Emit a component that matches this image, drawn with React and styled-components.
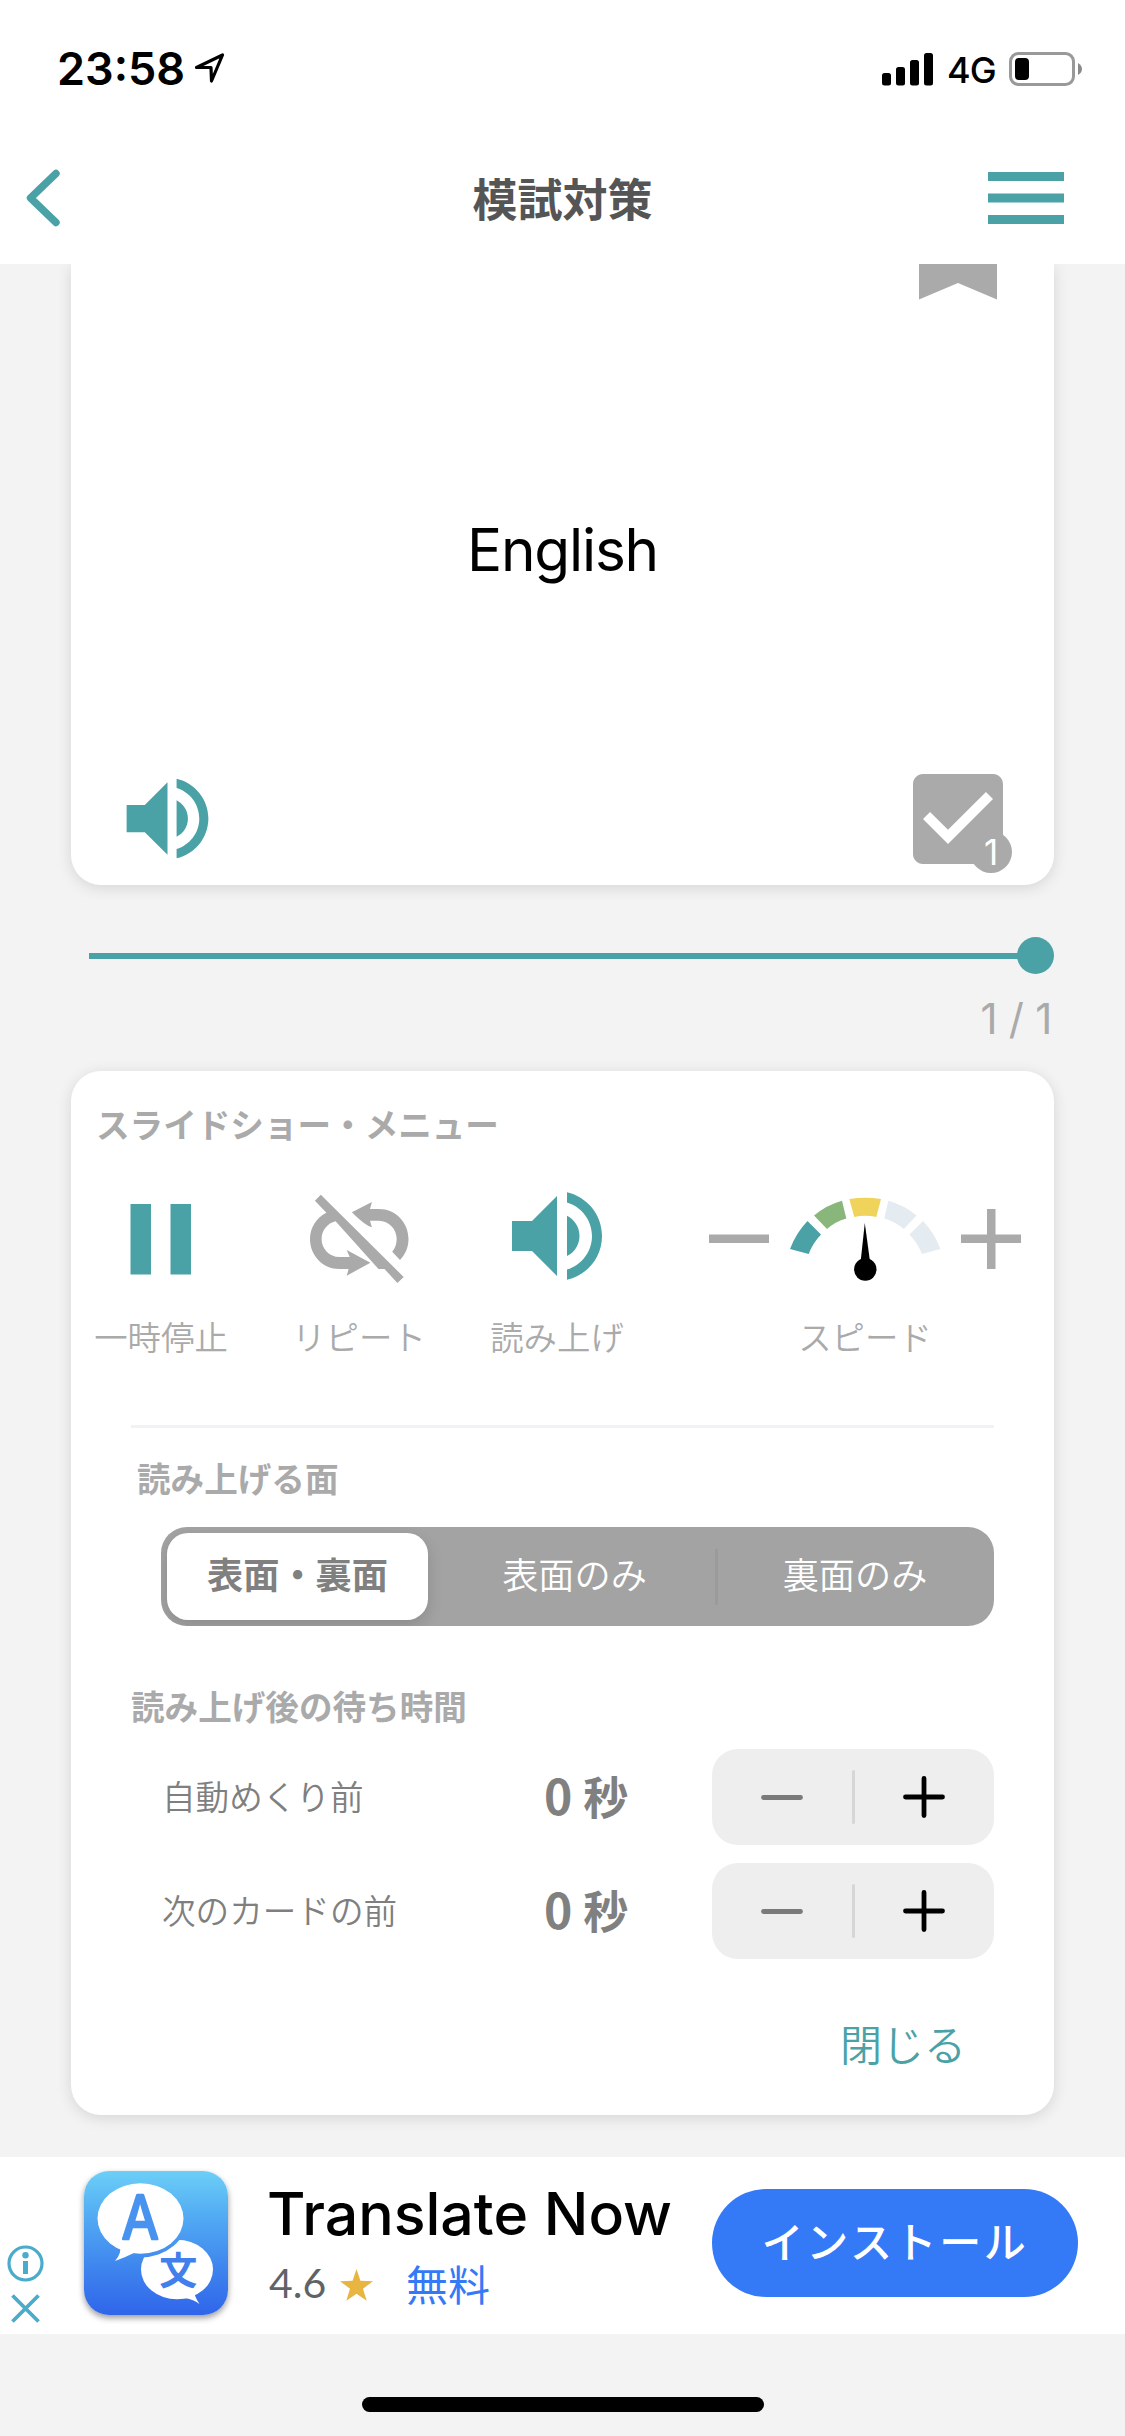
import React, { useState } from "react";
import styled, { createGlobalStyle } from "styled-components";

const TEAL = "#4aa2a7";
const GRAY = "#aaaaaa";
const JP = `"Noto Sans CJK JP", sans-serif`;
const LATIN = `Inter, "Liberation Sans", sans-serif`;

const GlobalStyle = createGlobalStyle`
    * {
        box-sizing: border-box;
    }
    body {
        margin: 0;
        background-color: #f3f3f3;
        font-family: ${JP};
    }
    button {
        border: none;
        padding: 0;
        margin: 0;
        background: none;
        font-family: inherit;
        cursor: pointer;
    }
    svg {
        display: block;
    }
`;

const Screen = styled.div`
    width: 1125px;
    height: 2436px;
    display: flex;
    flex-direction: column;
    background-color: #f3f3f3;
    overflow: hidden;
`;

const TopArea = styled.header`
    position: relative;
    z-index: 1;
    height: 264px;
    background-color: #fff;
`;

const StatusBar = styled.div`
    height: 132px;
    padding: 41px 43px 0 57px;
    display: flex;
    align-items: flex-start;
    justify-content: space-between;
    font-family: ${LATIN};
    color: #000;
`;

const StatusGroup = styled.div`
    height: 56px;
    display: flex;
    align-items: center;
`;

const Clock = styled.span`
    width: 137px;
    font-size: 45px;
    font-weight: 600;
    line-height: 56px;
`;

const Network = styled.span`
    width: 76px;
    padding: 2px 0 0 14px;
    font-size: 36px;
    font-weight: 500;
    letter-spacing: -1px;
    line-height: 56px;
`;

const NavBar = styled.div`
    height: 132px;
    padding: 0 61px 0 26px;
    display: grid;
    grid-template-columns: 200px 1fr 165px;
    align-items: center;
`;

const NavButton = styled.button`
    justify-self: ${(props) => props.$side};
    margin-bottom: 1px;
`;

const NavTitle = styled.h1`
    margin: 0;
    text-align: center;
    font-size: 45px;
    font-weight: 700;
    line-height: 60px;
    color: #555;
`;

const Content = styled.main`
    padding: 0 71px;
    display: flex;
    flex-direction: column;
`;

const FlashCard = styled.section`
    height: 621px;
    background-color: #fff;
    border-radius: 0 0 30px 30px;
    box-shadow: 0 3px 15px rgba(0, 0, 0, 0.12);
    display: flex;
    flex-direction: column;
`;

const CardTop = styled.div`
    padding-right: 57px;
    display: flex;
    justify-content: flex-end;
`;

const Word = styled.div`
    flex: 1;
    padding-top: 39px;
    display: flex;
    align-items: center;
    justify-content: center;
    font-family: ${LATIN};
    font-size: 58.5px;
    letter-spacing: -1.2px;
    color: #000;
`;

const CardBottom = styled.div`
    height: 126px;
    padding: 0 36px 0 42px;
    display: flex;
    justify-content: space-between;
    align-items: flex-start;
`;

const SpeakButton = styled.button`
    margin-top: 5px;
`;

const CheckButton = styled.button`
    position: relative;
`;

const CheckCount = styled.span`
    position: absolute;
    left: 72px;
    top: 72px;
    width: 42px;
    height: 42px;
    border-radius: 50%;
    background-color: ${GRAY};
    color: #fff;
    font-family: ${LATIN};
    font-size: 35px;
    line-height: 42px;
    text-align: center;
`;

const Slider = styled.div`
    height: 37px;
    margin: 52px 0 0 18px;
    display: flex;
    align-items: center;
`;

const Track = styled.div`
    flex: 1;
    height: 6px;
    margin-right: -2px;
    background-color: ${TEAL};
`;

const Knob = styled.div`
    width: 37px;
    height: 37px;
    border-radius: 50%;
    background-color: ${TEAL};
`;

const Counter = styled.div`
    height: 97px;
    padding: 20px 2px 0 0;
    font-family: ${LATIN};
    font-size: 42px;
    font-weight: 400;
    letter-spacing: -0.3px;
    line-height: 50px;
    text-align: right;
    color: ${GRAY};
`;

const Panel = styled.section`
    height: 1044px;
    padding-top: 31px;
    background-color: #fff;
    border-radius: 30px;
    box-shadow: 0 3px 15px rgba(0, 0, 0, 0.12);
    display: flex;
    flex-direction: column;
`;

const Heading = styled.h2`
    margin: ${(props) => props.$margin};
    font-size: 33.6px;
    font-weight: 700;
    line-height: 44px;
    color: ${GRAY};
`;

const Controls = styled.div`
    padding-left: 24px;
    display: flex;
`;

const Control = styled.div`
    width: ${(props) => props.$width || "132px"};
    margin-right: ${(props) => props.$gap || "66px"};
    display: flex;
    flex-direction: column;
    align-items: center;
`;

const ControlIcon = styled.div`
    width: 100%;
    height: 120px;
    padding-top: ${(props) => (props.$flush ? "0" : "6px")};
    display: flex;
    align-items: center;
    justify-content: ${(props) => (props.$spread ? "space-between" : "center")};
`;

const ControlLabel = styled.span`
    margin-top: 18px;
    font-size: 33.4px;
    font-weight: 350;
    line-height: 44px;
    white-space: nowrap;
    color: ${GRAY};
`;

const Divider = styled.hr`
    width: 863px;
    height: 3px;
    margin: 67px 0 0 60px;
    border: none;
    background-color: #f2f2f6;
`;

const Segmented = styled.div`
    width: 833px;
    height: 99px;
    margin-left: 90px;
    padding: 6px 0;
    border-radius: 26px;
    background-color: #a3a3a3;
    display: flex;
    align-items: center;
    overflow: hidden;
`;

const Segment = styled.button`
    flex: none;
    width: ${(props) => props.$width};
    height: 87px;
    margin: ${(props) => (props.$active ? "0 6px" : "0")};
    padding-bottom: 6px;
    border-radius: 21px;
    background-color: ${(props) => (props.$active ? "#fff" : "transparent")};
    box-shadow: ${(props) => (props.$active ? "0 6px 16px rgba(0, 0, 0, 0.14)" : "none")};
    color: ${(props) => (props.$active ? "#808080" : "#fff")};
    font-size: 36.2px;
    font-weight: ${(props) => (props.$active ? 700 : 350)};
    line-height: 81px;
`;

const SegmentLine = styled.span`
    width: 3px;
    height: 56px;
    background-color: #9b9b9d;
`;

const WaitRow = styled.div`
    height: 96px;
    margin: 0 60px 18px 91px;
    display: flex;
    align-items: center;
`;

const WaitLabel = styled.span`
    width: 382px;
    padding-bottom: 2px;
    font-size: 33.6px;
    font-weight: 350;
    line-height: 44px;
    color: #7f7f7f;
`;

const WaitValue = styled.span`
    width: 168px;
    font-size: 48px;
    font-weight: 700;
    line-height: 60px;
    padding-bottom: 4px;
    color: #808080;
`;

const WaitUnit = styled.span`
    font-size: 45px;
`;

const Stepper = styled.div`
    width: 282px;
    height: 96px;
    border-radius: 26px;
    background-color: #eeeeee;
    display: flex;
    align-items: center;
`;

const StepButton = styled.button`
    flex: 1;
    height: 96px;
    display: flex;
    align-items: center;
    justify-content: center;
    color: ${(props) => (props.disabled ? "#7a7a79" : "#000")};
`;

const StepLine = styled.span`
    width: 3px;
    height: 54px;
    background-color: #d6d6d6;
    border-radius: 2px;
`;

const CloseButton = styled.button`
    align-self: flex-end;
    margin: 41px 88px 0 0;
    font-size: 42px;
    font-weight: 350;
    line-height: 50px;
    color: ${TEAL};
`;

const AdBanner = styled.aside`
    height: 177px;
    margin-top: 42px;
    background-color: #fff;
    display: flex;
`;

const AdMarks = styled.div`
    width: 84px;
    padding: 88px 0 0 7px;
`;

const AppIcon = styled.div`
    width: 144px;
    height: 144px;
    margin-top: 14px;
    border-radius: 25px;
    background: linear-gradient(#6ccff7 0%, #51a9f3 33%, #3f86ee 66%, #2f65ea 100%);
    box-shadow: 0 3px 6px rgba(0, 0, 0, 0.4);
    overflow: hidden;
`;

const AdText = styled.div`
    width: 484px;
    padding: 20px 0 0 41px;
`;

const AdTitle = styled.div`
    margin-left: -2px;
    font-family: ${LATIN};
    font-size: 59px;
    font-weight: 500;
    line-height: 73px;
    white-space: nowrap;
    color: #000;
`;

const AdMeta = styled.div`
    height: 60px;
    margin-top: 3px;
    display: flex;
    align-items: center;
`;

const Rating = styled.span`
    width: 71px;
    font-family: Lato, ${LATIN};
    font-size: 41px;
    line-height: 60px;
    color: #5f6368;
`;

const StarIcon = styled.svg`
    margin-top: 3px;
`;

const Price = styled.span`
    margin-left: 33px;
    font-size: 42px;
    font-weight: 400;
    line-height: 60px;
    color: #3479f6;
`;

const InstallButton = styled.button`
    width: 366px;
    height: 108px;
    margin-top: 32px;
    padding-bottom: 6px;
    border-radius: 54px;
    background-color: #3479f6;
    color: #fff;
    font-size: 42px;
    font-weight: 500;
    letter-spacing: 2.6px;
    line-height: 102px;
`;

const HomeIndicator = styled.div`
    width: 402px;
    height: 15px;
    margin: 63px auto 0;
    border-radius: 8px;
    background-color: #000;
`;

const SpeakerIcon = ({ size }) => (
    <svg width={size} height={size} viewBox="0 0 24 24" fill={TEAL}>
        <path d="M3 9v6h4l5 5V4L7 9H3zm13.5 3c0-1.77-1.02-3.29-2.5-4.03v8.05c1.48-.73 2.5-2.25 2.5-4.02zM14 3.23v2.06c2.89.86 5 3.54 5 6.71s-2.11 5.85-5 6.71v2.06c4.01-.91 7-4.49 7-8.77s-2.99-7.86-7-8.77z" />
    </svg>
);

const LocationIcon = () => (
    <svg width="31" height="32" viewBox="0 0 31 32">
        <path d="M2.5 14.5 L28.5 2 L17.5 28 L17 14.5 Z" fill="none" stroke="#000" strokeWidth="3.2" strokeLinejoin="round" />
    </svg>
);

const SignalIcon = () => (
    <svg width="51" height="33" viewBox="0 0 51 33">
        <rect x="0" y="20" width="9" height="12.5" rx="2.5" />
        <rect x="14" y="14" width="9" height="18.5" rx="2.5" />
        <rect x="28" y="7" width="9" height="25.5" rx="2.5" />
        <rect x="42" y="0" width="9" height="32.5" rx="2.5" />
    </svg>
);

const BatteryIcon = () => (
    <svg width="73" height="34" viewBox="0 0 73 34">
        <rect x="1.5" y="1.5" width="63" height="31" rx="8" fill="none" stroke="#999" strokeWidth="3" />
        <rect x="6" y="6" width="14" height="22" rx="4" fill="#000" />
        <path d="M69 11 C71.5 12.5 73 14.5 73 17 C73 19.5 71.5 21.5 69 23 Z" fill="#8a8a8a" />
    </svg>
);

const PauseIcon = () => (
    <svg width="62" height="71" viewBox="0 0 62 71" fill={TEAL}>
        <rect x="0.5" width="20.5" height="70.5" />
        <rect x="40.5" width="20.5" height="70.5" />
    </svg>
);

const RepeatOffIcon = () => (
    <svg width="99" height="90" viewBox="310 1194 99 90" fill={GRAY}>
        <path d="M320.8 1194.7 L314.9 1200.7 L326.4 1212.7 C316.5 1217.5 310 1227.5 310 1239 C310 1255.6 323 1269 339.3 1269 H348.6 L346.7 1275.7 L370.4 1262.7 L346.7 1250 L349.7 1257 H339.3 C329.5 1257 321.6 1249 321.6 1239 C321.6 1230.5 327.5 1223.2 335.6 1221.3 L378.5 1269 H384.5 L397.4 1283 L403.7 1277 Z" />
        <path d="M378.5 1262 V1269 H386 Z" />
        <path d="M351.9 1212.3 L371.9 1202 L370 1209 H378.9 C395.5 1209 408.5 1222.4 408.5 1239 C408.5 1247 405.4 1254.5 400 1260 L392.2 1251.7 C395.1 1248.3 396.7 1244 396.7 1239 C396.7 1229 388.8 1220.7 378.9 1220.7 H370 L371.9 1227.3 L368.5 1226 C361.5 1222 356.5 1217 351.9 1212.3 Z" />
    </svg>
);

const MinusIcon = () => (
    <svg width="60" height="60" viewBox="0 0 60 60" fill={GRAY}>
        <rect y="25.5" width="60" height="8.5" />
    </svg>
);

const PlusIcon = () => (
    <svg width="60" height="60" viewBox="0 0 60 60" fill={GRAY}>
        <rect y="25.5" width="60" height="8.5" />
        <rect x="26" width="8.5" height="60" />
    </svg>
);

const GaugeIcon = () => (
    <svg width="151" height="84" viewBox="790 1197 151 84">
        <path d="M807.5 1221 Q796 1233 790 1249 L808.7 1254 Q812.5 1243.5 821 1234.5 Z" fill={TEAL} />
        <path d="M814 1215.5 Q826.5 1205 842 1200.7 L846.3 1218.5 Q835.5 1221.5 827 1229 Z" fill="#89b77b" />
        <path d="M849.3 1199 Q865.3 1196.4 881 1199 L876.3 1217 Q865.3 1214.5 854.3 1217 Z" fill="#f0d35b" />
        <path d="M888.3 1200.7 Q904 1205 916.5 1215.5 L903.7 1229 Q895 1221.5 884.3 1218.5 Z" fill="#e4ebf1" />
        <path d="M923 1221 Q934.5 1233 940.5 1249 L922 1254 Q918 1243.5 909.5 1234.5 Z" fill="#e4ebf1" />
        <path d="M864.8 1223 L869.8 1260 H860.8 Z" />
        <circle cx="865.3" cy="1269.5" r="11.2" />
    </svg>
);

const StepMinus = () => (
    <svg width="42" height="42" viewBox="0 0 42 42" stroke="currentColor" strokeWidth="4.8" strokeLinecap="round">
        <path d="M2.5 21.5 H39.5" />
    </svg>
);

const StepPlus = () => (
    <svg width="42" height="42" viewBox="0 0 42 42" stroke="currentColor" strokeWidth="4.8" strokeLinecap="round">
        <path d="M2.5 21 H39.5 M21 2.5 V39.5" />
    </svg>
);

const TranslateIcon = () => (
    <svg width="144" height="144" viewBox="84 2171 144 144">
        <mask id="gap">
            <rect x="84" y="2171" width="144" height="144" fill="#fff" />
            <ellipse cx="140.5" cy="2218.5" rx="46.5" ry="39" fill="#000" />
        </mask>
        <ellipse cx="140.5" cy="2218.5" rx="43" ry="35.3" fill="#fff" />
        <path d="M120 2245 Q122 2253 115 2261 Q126 2257 136 2252 Z" fill="#fff" />
        <g mask="url(#gap)" fill="#fff">
            <ellipse cx="177" cy="2269.5" rx="36" ry="29.8" />
            <path d="M184 2298 Q193 2299 199.5 2304 Q194 2296 194.5 2291 Z" />
        </g>
        <text x="140.3" y="2239" textAnchor="middle" fontFamily="Inter" fontWeight="400" fontSize="60" fill="#4893ef" stroke="#4893ef" strokeWidth="2.6" strokeLinejoin="round" textLength="37" lengthAdjust="spacingAndGlyphs">A</text>
        <text x="178.2" y="2284" textAnchor="middle" fontFamily="Noto Sans CJK JP" fontWeight="700" fontSize="38" fill="#417fec">文</text>
    </svg>
);

const waits = [
    { id: "flip", label: "自動めくり前" },
    { id: "next", label: "次のカードの前" },
];

const App = () => {
    const [seconds, setSeconds] = useState({ flip: 0, next: 0 });

    const step = (id, diff) => {
        setSeconds((prev) => ({ ...prev, [id]: Math.max(0, prev[id] + diff) }));
    };

    return (
        <>
            <GlobalStyle />
            <Screen>
                <TopArea>
                    <StatusBar>
                        <StatusGroup>
                            <Clock>23:58</Clock>
                            <LocationIcon />
                        </StatusGroup>
                        <StatusGroup>
                            <SignalIcon />
                            <Network>4G</Network>
                            <BatteryIcon />
                        </StatusGroup>
                    </StatusBar>
                    <NavBar>
                        <NavButton $side="start">
                            <svg width="36" height="60" viewBox="0 0 36 60" fill="none" stroke={TEAL} strokeWidth="7.4" strokeLinecap="round" strokeLinejoin="round">
                                <path d="M30 5.5 L4.5 30 L30 54.5" />
                            </svg>
                        </NavButton>
                        <NavTitle>模試対策</NavTitle>
                        <NavButton $side="end">
                            <svg width="76" height="52" viewBox="0 0 76 52" fill={TEAL}>
                                <rect y="0" width="76" height="9" />
                                <rect y="21.5" width="76" height="9" />
                                <rect y="43" width="76" height="9" />
                            </svg>
                        </NavButton>
                    </NavBar>
                </TopArea>
                <Content>
                    <FlashCard>
                        <CardTop>
                            <svg width="78" height="36" viewBox="0 0 78 36" fill={GRAY}>
                                <path d="M0 0 H78 V35.5 L39 19 L0 35.5 Z" />
                            </svg>
                        </CardTop>
                        <Word>English</Word>
                        <CardBottom>
                            <SpeakButton>
                                <SpeakerIcon size={109} />
                            </SpeakButton>
                            <CheckButton>
                                <svg width="120" height="120" viewBox="0 0 24 24" fill={GRAY}>
                                    <path d="M19 3H5c-1.11 0-2 .9-2 2v14c0 1.1.89 2 2 2h14c1.11 0 2-.9 2-2V5c0-1.1-.89-2-2-2zm-9 14l-5-5 1.41-1.41L10 14.17l7.59-7.59L19 8l-9 9z" />
                                </svg>
                                <CheckCount>1</CheckCount>
                            </CheckButton>
                        </CardBottom>
                    </FlashCard>
                    <Slider>
                        <Track />
                        <Knob />
                    </Slider>
                    <Counter>1 / 1</Counter>
                    <Panel>
                        <Heading $margin="0 0 30px 25px">スライドショー・メニュー</Heading>
                        <Controls>
                            <Control>
                                <ControlIcon><PauseIcon /></ControlIcon>
                                <ControlLabel>一時停止</ControlLabel>
                            </Control>
                            <Control>
                                <ControlIcon><RepeatOffIcon /></ControlIcon>
                                <ControlLabel>リピート</ControlLabel>
                            </Control>
                            <Control $gap="86px">
                                <ControlIcon $flush><SpeakerIcon size={120} /></ControlIcon>
                                <ControlLabel>読み上げ</ControlLabel>
                            </Control>
                            <Control $width="312px" $gap="0">
                                <ControlIcon $spread>
                                    <MinusIcon />
                                    <GaugeIcon />
                                    <PlusIcon />
                                </ControlIcon>
                                <ControlLabel>スピード</ControlLabel>
                            </Control>
                        </Controls>
                        <Divider />
                        <Heading $margin="28px 0 27px 66px">読み上げる面</Heading>
                        <Segmented>
                            <Segment $active $width="261px">表面・裏面</Segment>
                            <Segment $width="281px">表面のみ</Segment>
                            <SegmentLine />
                            <Segment $width="274px">裏面のみ</Segment>
                        </Segmented>
                        <Heading $margin="58px 0 21px 60px">読み上げ後の待ち時間</Heading>
                        {waits.map(({ id, label }) => (
                            <WaitRow key={id}>
                                <WaitLabel>{label}</WaitLabel>
                                <WaitValue>{seconds[id]} <WaitUnit>秒</WaitUnit></WaitValue>
                                <Stepper>
                                    <StepButton disabled={seconds[id] === 0} onClick={() => step(id, -1)}>
                                        <StepMinus />
                                    </StepButton>
                                    <StepLine />
                                    <StepButton onClick={() => step(id, 1)}>
                                        <StepPlus />
                                    </StepButton>
                                </Stepper>
                            </WaitRow>
                        ))}
                        <CloseButton>閉じる</CloseButton>
                    </Panel>
                </Content>
                <AdBanner>
                    <AdMarks>
                        <svg width="37" height="78" viewBox="0 0 37 78" fill="none" stroke="#4aabca" strokeWidth="3.2">
                            <circle cx="18.5" cy="18.5" r="16.5" />
                            <circle cx="18.5" cy="10.3" r="3.2" fill="#4aabca" stroke="none" />
                            <rect x="16" y="16" width="5" height="13" fill="#4aabca" stroke="none" />
                            <path d="M5.5 50.5 L31.5 76.5 M31.5 50.5 L5.5 76.5" strokeWidth="3.8" />
                        </svg>
                    </AdMarks>
                    <AppIcon><TranslateIcon /></AppIcon>
                    <AdText>
                        <AdTitle>Translate Now</AdTitle>
                        <AdMeta>
                            <Rating>4.6</Rating>
                            <StarIcon width="33" height="32" viewBox="0 0 33 32" fill="#e8b541">
                                <path d="M16.5 0 L20.4 11.7 L33 12.2 L23 19.7 L26.7 31.8 L16.5 24.7 L6.3 31.8 L10 19.7 L0 12.2 L12.6 11.7 Z" />
                            </StarIcon>
                            <Price>無料</Price>
                        </AdMeta>
                    </AdText>
                    <InstallButton>インストール</InstallButton>
                </AdBanner>
                <HomeIndicator />
            </Screen>
        </>
    );
};

export default App;
